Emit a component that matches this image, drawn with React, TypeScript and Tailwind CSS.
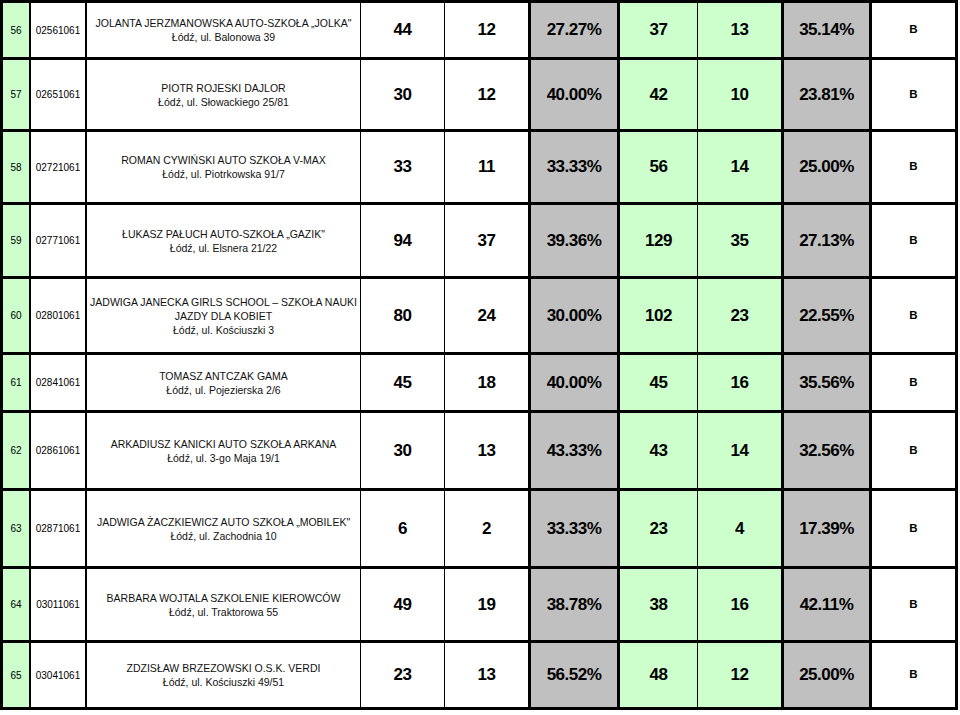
const cols = 'grid grid-cols-[28px_56px_274px_84px_86px_89px_78px_86px_88px_86px]';

type Row = {
  no: string;
  code: string;
  name: string[];
  h: string;
  vals: string[];
};

const rows: Row[] = [
  { no: '56', code: '02561061', h: 'h-[57px]', name: ['JOLANTA JERZMANOWSKA AUTO-SZKOŁA „JOLKA"', 'Łódź, ul. Balonowa 39'], vals: ['44', '12', '27.27%', '37', '13', '35.14%'] },
  { no: '57', code: '02651061', h: 'h-[72px]', name: ['PIOTR ROJESKI DAJLOR', 'Łódź, ul. Słowackiego 25/81'], vals: ['30', '12', '40.00%', '42', '10', '23.81%'] },
  { no: '58', code: '02721061', h: 'h-[73px]', name: ['ROMAN CYWIŃSKI AUTO SZKOŁA V-MAX', 'Łódź, ul. Piotrkowska 91/7'], vals: ['33', '11', '33.33%', '56', '14', '25.00%'] },
  { no: '59', code: '02771061', h: 'h-[74px]', name: ['ŁUKASZ PAŁUCH AUTO-SZKOŁA „GAZIK"', 'Łódź, ul. Elsnera 21/22'], vals: ['94', '37', '39.36%', '129', '35', '27.13%'] },
  { no: '60', code: '02801061', h: 'h-[76px]', name: ['JADWIGA JANECKA GIRLS SCHOOL – SZKOŁA NAUKI', 'JAZDY DLA KOBIET', 'Łódź, ul. Kościuszki 3'], vals: ['80', '24', '30.00%', '102', '23', '22.55%'] },
  { no: '61', code: '02841061', h: 'h-[58px]', name: ['TOMASZ ANTCZAK GAMA', 'Łódź, ul. Pojezierska 2/6'], vals: ['45', '18', '40.00%', '45', '16', '35.56%'] },
  { no: '62', code: '02861061', h: 'h-[78px]', name: ['ARKADIUSZ KANICKI AUTO SZKOŁA ARKANA', 'Łódź, ul. 3-go Maja 19/1'], vals: ['30', '13', '43.33%', '43', '14', '32.56%'] },
  { no: '63', code: '02871061', h: 'h-[78px]', name: ['JADWIGA ŻACZKIEWICZ AUTO SZKOŁA „MOBILEK"', 'Łódź, ul. Zachodnia 10'], vals: ['6', '2', '33.33%', '23', '4', '17.39%'] },
  { no: '64', code: '03011061', h: 'h-[74px]', name: ['BARBARA WOJTALA SZKOLENIE KIEROWCÓW', 'Łódź, ul. Traktorowa 55'], vals: ['49', '19', '38.78%', '38', '16', '42.11%'] },
  { no: '65', code: '03041061', h: 'h-[67px]', name: ['ZDZISŁAW BRZEZOWSKI O.S.K. VERDI', 'Łódź, ul. Kościuszki 49/51'], vals: ['23', '13', '56.52%', '48', '12', '25.00%'] },
];

// per value column: border + background
const valCell = [
  'border-r border-black bg-white',
  'border-r-[3px] border-black bg-white',
  'border-r-[3px] border-black bg-[#c0c0c0]',
  'border-r border-black bg-[#ccffcc]',
  'border-r-[3px] border-black bg-[#ccffcc]',
  'border-r-[3px] border-black bg-[#c0c0c0]',
];

export default function App() {
  return (
    <div className="min-h-screen bg-white font-['Liberation_Sans',Arial,sans-serif] text-black">
      <div className="w-[958px] border-l-[3px] border-t-[3px] border-black">
        {rows.map((r) => (
          <div key={r.no} className={`${cols} ${r.h}`}>
            <div className="flex items-center justify-center border-r-2 border-b-[3px] border-black bg-[#ccffcc] text-[10px]">
              {r.no}
            </div>
            <div className="flex items-center justify-center border-r-2 border-b-[3px] border-black text-[10px]">
              {r.code}
            </div>
            <div className="flex flex-col items-center justify-center border-r border-b-[3px] border-black text-center text-[10.5px] leading-[14px] text-[#111]">
              {r.name.map((l, i) => (
                <span key={i}>{l}</span>
              ))}
            </div>
            {r.vals.map((v, i) => (
              <div
                key={i}
                className={`flex items-center justify-center border-b-[3px] text-[17px] font-bold tracking-[-0.5px] ${valCell[i]}`}
              >
                {v}
              </div>
            ))}
            <div className="flex items-center justify-center border-r-[3px] border-b-[3px] border-black text-[11.5px] font-bold">
              B
            </div>
          </div>
        ))}
      </div>
    </div>
  );
}
